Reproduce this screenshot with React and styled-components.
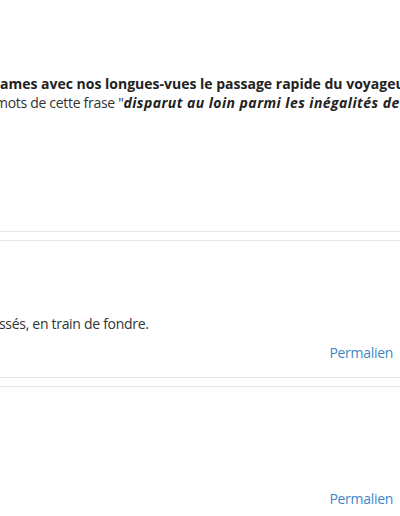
import React from 'react';
import styled, { createGlobalStyle } from 'styled-components';

const Global = createGlobalStyle`
  html, body {
    margin: 0;
    padding: 0;
    overflow: hidden;
    background: #fff;
  }
  body {
    font-family: "Open Sans", "Liberation Sans", sans-serif;
    font-size: 14px;
    color: #333;
  }
`;

const Page = styled.div`
  width: 400px;
  height: 516px;
  overflow: hidden;
`;

const Article = styled.div`
  padding-top: 74px;
  height: 157px;
  border-bottom: 1px solid #e6e6e6;
`;

const Line = styled.div`
  white-space: nowrap;
  line-height: 19px;
  margin-left: ${p => p.$shift || 0}px;
  font-weight: ${p => (p.$bold ? 700 : 400)};
  color: ${p => (p.$bold ? '#222' : '#333')};
  letter-spacing: ${p => (p.$bold ? '0' : '-0.3px')};
  strong {
    font-weight: 700;
    font-style: italic;
    color: #222;
    letter-spacing: 0.45px;
  }
`;

const Comments = styled.div`
  display: flex;
  flex-direction: column;
  gap: 8px;
  margin-top: 8px;
`;

const Comment = styled.div`
  border-top: 1px solid #e6e6e6;
  border-bottom: 1px solid #e6e6e6;
  padding: 73px 7px 14px 0;
`;

const Body = styled.div`
  line-height: 20px;
  min-height: 20px;
  white-space: nowrap;
  letter-spacing: -0.3px;
  margin-left: ${p => p.$shift || 0}px;
`;

const Footer = styled.div`
  display: flex;
  justify-content: flex-end;
  margin-top: 9px;
  line-height: 20px;
`;

const Permalink = styled.a`
  color: #3f85c6;
  text-decoration: none;
  font-size: 14px;
  letter-spacing: -0.3px;
`;

const comments = [
  { id: 1, text: 'ssés, en train de fondre.', shift: -1 },
  { id: 2, text: '' },
];

export default function App() {
  return (
    <Page>
      <Global />
      <Article>
        <Line $bold>ames avec nos longues-vues le passage rapide du voyageur</Line>
        <Line $shift={-5}>
          mots de cette frase "<strong>disparut au loin parmi les inégalités de l'horizon</strong>"
        </Line>
      </Article>
      <Comments>
        {comments.map(c => (
          <Comment key={c.id}>
            <Body $shift={c.shift}>{c.text}</Body>
            <Footer>
              <Permalink href="#">Permalien</Permalink>
            </Footer>
          </Comment>
        ))}
      </Comments>
    </Page>
  );
}
